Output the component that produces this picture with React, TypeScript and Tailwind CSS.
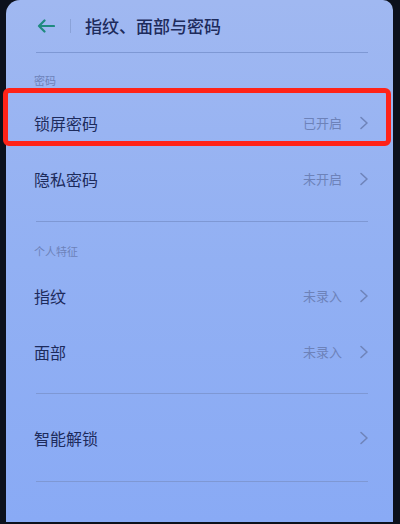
const font = "font-['Noto_Sans_CJK_SC','Noto_Sans',sans-serif]";

function Chevron() {
  return (
    <svg width="10" height="14" viewBox="0 0 10 14" fill="none" className="shrink-0">
      <path d="M2 1.5 L8 7 L2 12.5" stroke="#6f84ba" strokeWidth="1.6" strokeLinecap="round" strokeLinejoin="round" />
    </svg>
  );
}

function Row({ title, value }: { title: string; value?: string }) {
  return (
    <div className="h-[56px] flex items-center pl-[28px] pr-[24px]">
      <span className="text-[16px] leading-[22px] text-[#1d2b5c]">{title}</span>
      <div className="ml-auto flex items-center gap-[17px]">
        {value && <span className="text-[13px] leading-[18px] text-[#6d82b9]">{value}</span>}
        <Chevron />
      </div>
    </div>
  );
}

function Divider() {
  return <div className="h-px ml-[30px] mr-[25px] bg-[#7e98d4]" />;
}

export default function App() {
  return (
    <div className={`w-[400px] h-[524px] bg-[#0c111c] flex pl-[6px] pr-[7px] pb-[2px] ${font}`}>
      <div className="relative flex-1 rounded-tl-[14px] rounded-tr-[10px] bg-gradient-to-b from-[#a0b8f1] via-[#92b0f3] to-[#89aaf5] flex flex-col">
        {/* header */}
        <div className="h-[52px] flex items-center pl-[31px]">
          <svg width="18" height="14" viewBox="0 0 18 14" fill="none">
            <path d="M17 7 H2 M7.5 1.5 L2 7 L7.5 12.5" stroke="#1f8a7f" strokeWidth="2.2" strokeLinecap="round" strokeLinejoin="round" />
          </svg>
          <div className="ml-[15px] w-px h-[14px] bg-[#8aa2d8]" />
          <span className="ml-[14px] text-[17px] leading-[24px] font-medium text-[#1d2b5c]">指纹、面部与密码</span>
        </div>
        <Divider />

        {/* 密码 */}
        <div className="h-[42px] flex items-end pb-[8px] pl-[28px]">
          <span className="text-[11px] leading-[14px] text-[#6d82b9]">密码</span>
        </div>
        <Row title="锁屏密码" value="已开启" />
        <Row title="隐私密码" value="未开启" />
        <div className="h-[14px]" />
        <Divider />

        {/* 个人特征 */}
        <div className="h-[46px] flex items-end pb-[10px] pl-[28px]">
          <span className="text-[11px] leading-[14px] text-[#6d82b9]">个人特征</span>
        </div>
        <Row title="指纹" value="未录入" />
        <Row title="面部" value="未录入" />
        <div className="h-[13px]" />
        <Divider />

        <div className="h-[16px]" />
        <Row title="智能解锁" />
        <div className="h-[15px]" />
        <Divider />

        {/* red highlight annotation */}
        <div className="absolute left-[-3px] top-[88px] w-[388px] h-[58px] border-[5px] border-[#ff2318] rounded-[6px]" />
      </div>
    </div>
  );
}
